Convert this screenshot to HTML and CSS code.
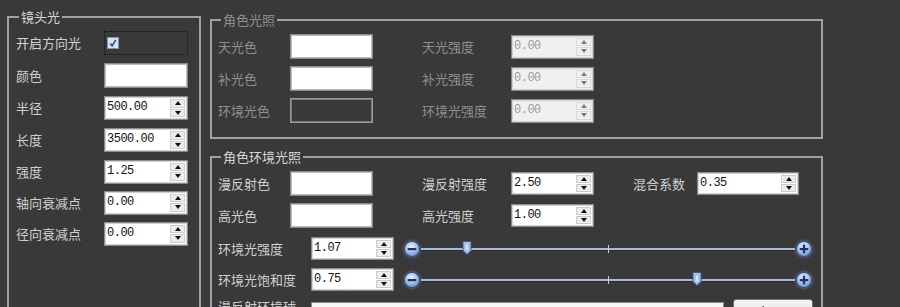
FILE: index.html
```html
<!DOCTYPE html>
<html lang="zh-CN">
<head>
    <meta charset="UTF-8">
    <meta name="viewport" content="width=device-width, initial-scale=1.0">
    <title>灯光参数</title>
    <link rel="stylesheet" href="styles.css">
</head>
<body>
    <div class="panel">
        <fieldset class="group lens">
            <legend>镜头光</legend>
            <div class="lens-grid">
                <span class="lbl">开启方向光</span>
                <div class="focus-box">
                    <svg class="check" width="12" height="12" viewBox="0 0 12 12">
                        <rect x="0.5" y="0.5" width="11" height="11" fill="#dae2ee" stroke="#8393ae"/>
                        <path d="M3.2 6.4 L5.1 8.8 L8.8 2.8" fill="none" stroke="#2f4f8e" stroke-width="1.6"/>
                    </svg>
                </div>

                <span class="lbl">颜色</span>
                <div class="swatch"></div>

                <span class="lbl">半径</span>
                <div class="spin"><span class="val">500.00</span><span class="arrows"><i class="up"></i><i class="down"></i></span></div>

                <span class="lbl">长度</span>
                <div class="spin"><span class="val">3500.00</span><span class="arrows"><i class="up"></i><i class="down"></i></span></div>

                <span class="lbl">强度</span>
                <div class="spin"><span class="val">1.25</span><span class="arrows"><i class="up"></i><i class="down"></i></span></div>

                <span class="lbl">轴向衰减点</span>
                <div class="spin"><span class="val">0.00</span><span class="arrows"><i class="up"></i><i class="down"></i></span></div>

                <span class="lbl">径向衰减点</span>
                <div class="spin"><span class="val">0.00</span><span class="arrows"><i class="up"></i><i class="down"></i></span></div>
            </div>
        </fieldset>

        <div class="right-col">
            <fieldset class="group role is-disabled">
                <legend>角色光照</legend>
                <div class="role-grid">
                    <span class="lbl">天光色</span>
                    <div class="swatch"></div>
                    <span></span>
                    <span class="lbl">天光强度</span>
                    <div class="spin"><span class="val">0.00</span><span class="arrows"><i class="up"></i><i class="down"></i></span></div>

                    <span class="lbl">补光色</span>
                    <div class="swatch"></div>
                    <span></span>
                    <span class="lbl">补光强度</span>
                    <div class="spin"><span class="val">0.00</span><span class="arrows"><i class="up"></i><i class="down"></i></span></div>

                    <span class="lbl">环境光色</span>
                    <div class="swatch dark"></div>
                    <span></span>
                    <span class="lbl">环境光强度</span>
                    <div class="spin"><span class="val">0.00</span><span class="arrows"><i class="up"></i><i class="down"></i></span></div>
                </div>
            </fieldset>

            <fieldset class="group ambient">
                <legend>角色环境光照</legend>
                <div class="ambient-grid">
                    <span class="lbl">漫反射色</span>
                    <div class="swatch"></div>
                    <span></span>
                    <span class="lbl">漫反射强度</span>
                    <div class="spin"><span class="val">2.50</span><span class="arrows"><i class="up"></i><i class="down"></i></span></div>
                    <span></span>
                    <span class="lbl">混合系数</span>
                    <div class="spin"><span class="val">0.35</span><span class="arrows"><i class="up"></i><i class="down"></i></span></div>

                    <span class="lbl">高光色</span>
                    <div class="swatch"></div>
                    <span></span>
                    <span class="lbl">高光强度</span>
                    <div class="spin"><span class="val">1.00</span><span class="arrows"><i class="up"></i><i class="down"></i></span></div>
                </div>

                <div class="slider-rows">
                    <div class="row">
                        <span class="lbl wide">环境光强度</span>
                        <div class="spin"><span class="val">1.07</span><span class="arrows"><i class="up"></i><i class="down"></i></span></div>
                        <div class="slider">
                            <svg class="knob" width="18" height="18" viewBox="0 0 18 18">
                                <defs><radialGradient id="k1" cx="45%" cy="35%" r="70%"><stop offset="0" stop-color="#eef4fd"/><stop offset="0.5" stop-color="#a9c2ea"/><stop offset="1" stop-color="#5f80b8"/></radialGradient></defs>
                                <circle cx="9" cy="9" r="7.6" fill="url(#k1)" stroke="#2e4c80"/>
                                <rect x="4.6" y="7.9" width="8.8" height="2.4" rx="1.1" fill="#1c3466"/>
                            </svg>
                            <div class="track">
                                <span class="tick"></span>
                                <svg class="handle" style="left: 12.2%" width="11" height="16" viewBox="0 0 11 16">
                                    <path d="M1.5 1.5 H9.5 V10.5 L5.5 14.5 L1.5 10.5 Z" fill="#a8c0e8" stroke="#3a5a90"/>
                                    <path d="M5.5 4.5 V10" stroke="#f4f8ff" stroke-width="1.3"/>
                                </svg>
                            </div>
                            <svg class="knob" width="18" height="18" viewBox="0 0 18 18">
                                <defs><radialGradient id="k2" cx="45%" cy="35%" r="70%"><stop offset="0" stop-color="#eef4fd"/><stop offset="0.5" stop-color="#a9c2ea"/><stop offset="1" stop-color="#5f80b8"/></radialGradient></defs>
                                <circle cx="9" cy="9" r="7.6" fill="url(#k2)" stroke="#2e4c80"/>
                                <rect x="4.6" y="7.9" width="8.8" height="2.4" rx="1.1" fill="#1c3466"/>
                                <rect x="7.8" y="4.6" width="2.4" height="8.8" rx="1.1" fill="#1c3466"/>
                            </svg>
                        </div>
                    </div>

                    <div class="row">
                        <span class="lbl wide">环境光饱和度</span>
                        <div class="spin"><span class="val">0.75</span><span class="arrows"><i class="up"></i><i class="down"></i></span></div>
                        <div class="slider">
                            <svg class="knob" width="18" height="18" viewBox="0 0 18 18">
                                <defs><radialGradient id="k3" cx="45%" cy="35%" r="70%"><stop offset="0" stop-color="#eef4fd"/><stop offset="0.5" stop-color="#a9c2ea"/><stop offset="1" stop-color="#5f80b8"/></radialGradient></defs>
                                <circle cx="9" cy="9" r="7.6" fill="url(#k3)" stroke="#2e4c80"/>
                                <rect x="4.6" y="7.9" width="8.8" height="2.4" rx="1.1" fill="#1c3466"/>
                            </svg>
                            <div class="track">
                                <span class="tick"></span>
                                <svg class="handle" style="left: 73.7%" width="11" height="16" viewBox="0 0 11 16">
                                    <path d="M1.5 1.5 H9.5 V10.5 L5.5 14.5 L1.5 10.5 Z" fill="#a8c0e8" stroke="#3a5a90"/>
                                    <path d="M5.5 4.5 V10" stroke="#f4f8ff" stroke-width="1.3"/>
                                </svg>
                            </div>
                            <svg class="knob" width="18" height="18" viewBox="0 0 18 18">
                                <defs><radialGradient id="k4" cx="45%" cy="35%" r="70%"><stop offset="0" stop-color="#eef4fd"/><stop offset="0.5" stop-color="#a9c2ea"/><stop offset="1" stop-color="#5f80b8"/></radialGradient></defs>
                                <circle cx="9" cy="9" r="7.6" fill="url(#k4)" stroke="#2e4c80"/>
                                <rect x="4.6" y="7.9" width="8.8" height="2.4" rx="1.1" fill="#1c3466"/>
                                <rect x="7.8" y="4.6" width="2.4" height="8.8" rx="1.1" fill="#1c3466"/>
                            </svg>
                        </div>
                    </div>

                    <div class="row file-row">
                        <span class="lbl wide">漫反射环境球</span>
                        <div class="path-field">h:/work/lighting/hdr/ambient_diffuse_sphere.dds</div>
                        <button class="open-btn">打开</button>
                    </div>
                </div>
            </fieldset>
        </div>
    </div>
</body>
</html>
```

FILE: styles.css
```css
* {
    box-sizing: border-box;
}

body {
    margin: 0;
    height: 307px;
    overflow: hidden;
    background: #393939;
    font-family: "Noto Sans CJK SC", "Noto Sans", sans-serif;
    font-size: 13px;
    line-height: 16px;
    color: #d0d0d0;
}

.panel {
    display: flex;
    align-items: flex-start;
    gap: 9px;
    padding: 9px 0 0 7px;
}

/* group boxes */
.group {
    margin: 0;
    padding: 6px 0 0 6px;
    border: 2px solid #a2a2a2;
    min-width: 0;
}

.group legend {
    margin-left: 3px;
    padding: 0 2px;
    line-height: 16px;
    color: #d6d6d6;
}

.lbl {
    white-space: nowrap;
}

.lens {
    width: 194px;
    height: 330px;
    padding: 6px 0 0 7px;
}

.lens-grid {
    display: grid;
    grid-template-columns: 88px 84px;
    grid-template-rows: 24px 25px 24px 24px 23px 23px 23px;
    row-gap: 8px;
    align-items: center;
}

.lens-grid .lbl:nth-of-type(n+5) {
    margin-top: 1px;
}

.right-col {
    display: flex;
    flex-direction: column;
    gap: 10px;
    margin-top: 3px;
}

.role {
    width: 613px;
    height: 127px;
}

.role.is-disabled legend,
.role.is-disabled .lbl {
    color: #8f8f8f;
}

.role-grid {
    display: grid;
    grid-template-columns: 72px 83px 49px 89px 83px;
    grid-template-rows: 25px 25px 25px;
    row-gap: 7px;
    align-items: center;
}

.ambient {
    width: 613px;
    height: 180px;
}

.ambient-grid {
    display: grid;
    grid-template-columns: 72px 83px 49px 89px 83px 39px 64px 102px;
    grid-template-rows: 25px 25px;
    row-gap: 7px;
    align-items: center;
}

.ambient-grid .spin {
    height: 23px;
}

/* widgets */
.focus-box {
    height: 24px;
    border: 1px dotted #101010;
    display: flex;
    align-items: center;
    padding-left: 2px;
}

.check {
    display: block;
}

.swatch {
    height: 25px;
    background: #fff;
    border: 1px solid #8a8a8a;
    box-shadow: inset 0 0 0 1px #bdbdbd;
}

.swatch.dark {
    background: #393939;
    border-color: #9a9a9a;
    box-shadow: inset 0 0 0 1px #7a7a7a;
}

.spin {
    display: flex;
    height: 24px;
    background: #fff;
    border: 1px solid #8c8c8c;
    box-shadow: inset 0 0 0 1px #d0d0d0;
    color: #111;
    font-family: "Liberation Mono", monospace;
    font-size: 12px;
    letter-spacing: -0.5px;
}

.spin .val {
    flex: 1;
    padding: 3px 0 0 2px;
    line-height: 14px;
}

.spin .arrows {
    width: 15px;
    margin: 2px 2px 2px 0;
    display: flex;
    flex-direction: column;
    gap: 1px;
}

.spin .arrows i {
    flex: 1;
    display: flex;
    align-items: center;
    justify-content: center;
    background: #ececec;
    border: 1px solid #cdcdcd;
}

.spin .arrows .up::before {
    content: "";
    border-left: 3px solid transparent;
    border-right: 3px solid transparent;
    border-bottom: 4px solid #111;
}

.spin .arrows .down::before {
    content: "";
    border-left: 3px solid transparent;
    border-right: 3px solid transparent;
    border-top: 4px solid #111;
}

.is-disabled .spin {
    background: #f0f0f0;
    color: #9c9c9c;
}

.is-disabled .spin .arrows i {
    background: #f0f0f0;
    border-color: #dadada;
}

.is-disabled .spin .arrows .up::before {
    border-bottom-color: #7a7a7a;
}

.is-disabled .spin .arrows .down::before {
    border-top-color: #7a7a7a;
}

/* slider rows */
.slider-rows {
    display: flex;
    flex-direction: column;
    gap: 8px;
    margin-top: 9px;
}

.row {
    display: flex;
    align-items: center;
    height: 23px;
}

.row .lbl.wide {
    width: 93px;
    flex: none;
}

.row .spin {
    width: 83px;
    height: 23px;
    flex: none;
}

.slider {
    display: flex;
    align-items: center;
    width: 410px;
    margin-left: 9px;
}

.knob {
    display: block;
    flex: none;
    filter: drop-shadow(0 0 1.5px rgba(150, 180, 230, 0.6));
}

.track {
    position: relative;
    flex: 1;
    height: 2px;
    background: #aab8e0;
    box-shadow: 0 1px 0 #2c2c2c;
}

.tick {
    position: absolute;
    left: 50%;
    top: -3px;
    width: 1px;
    height: 8px;
    background: #c2cdea;
}

.handle {
    position: absolute;
    top: -8px;
    transform: translateX(-50%);
}

.file-row {
    height: 25px;
    align-items: flex-start;
}

.path-field {
    width: 413px;
    height: 22px;
    margin-top: 3px;
    flex: none;
    background: #f6f6f6;
    border: 1px solid #8c8c8c;
    padding: 2px 0 0 3px;
    color: #333;
    font-family: "Liberation Mono", monospace;
    font-size: 12px;
    white-space: nowrap;
    overflow: hidden;
}

.open-btn {
    width: 80px;
    height: 25px;
    margin-left: 9px;
    flex: none;
    background: linear-gradient(#f4f4f4, #dedede);
    border: 1px solid #707070;
    border-radius: 3px;
    font-family: "Noto Sans CJK SC", sans-serif;
    font-size: 13px;
    color: #111;
    padding: 0;
}
```
